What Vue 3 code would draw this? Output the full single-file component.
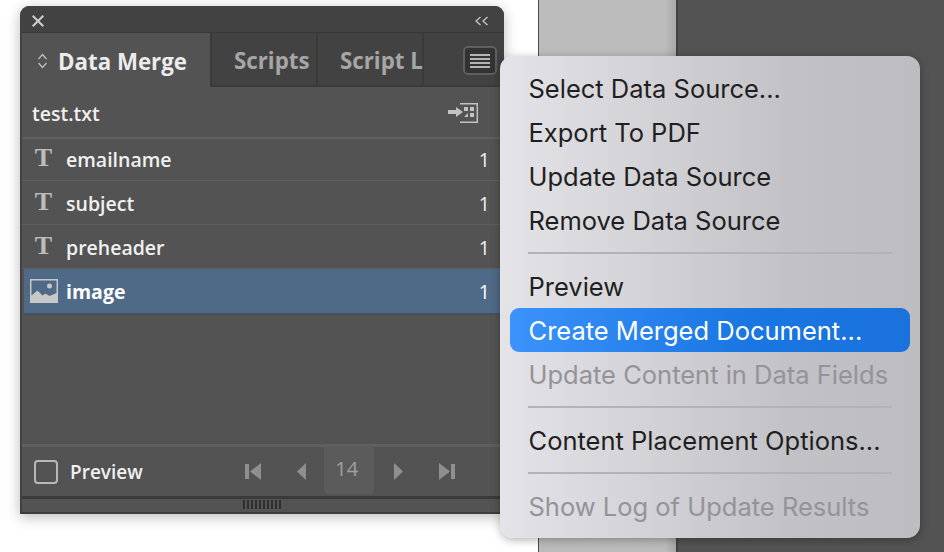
<script setup>
const rows = [
  { name: 'emailname', count: 1, kind: 'text' },
  { name: 'subject', count: 1, kind: 'text' },
  { name: 'preheader', count: 1, kind: 'text' },
  { name: 'image', count: 1, kind: 'image' },
]
const menu = [
  [
    { label: 'Select Data Source...' },
    { label: 'Export To PDF' },
    { label: 'Update Data Source' },
    { label: 'Remove Data Source' },
  ],
  [
    { label: 'Preview' },
    { label: 'Create Merged Document...', active: true },
    { label: 'Update Content in Data Fields', disabled: true },
  ],
  [{ label: 'Content Placement Options...' }],
  [{ label: 'Show Log of Update Results', disabled: true }],
]
</script>

<template>
  <div class="stage">
    <div class="paper"></div>
    <div class="pasteboard"></div>
    <div class="workspace"></div>

    <section class="panel">
      <header class="titlebar">
        <svg class="close" width="12" height="12" viewBox="0 0 12 12"><path d="M.7.7 11.300 11.300M11.300.7.7 11.300" stroke="#cfcfcf" stroke-width="2" fill="none"/></svg>
        <svg class="collapse" width="14" height="10" viewBox="0 0 14 10"><path d="M5.5 1 1 5 5.5 9M12.5 1 8 5 12.500 9" stroke="#c8c8c8" stroke-width="1.3" fill="none"/></svg>
      </header>

      <nav class="tabs">
        <div class="tab tab-active">
          <svg class="updown" width="11" height="16" viewBox="0 0 11 16"><path d="M1.5 6 5.5 1.500 9.500 6M1.500 10 5.500 14.500 9.500 10" stroke="#c2c2c2" stroke-width="1.2" fill="none"/></svg>
          <span>Data Merge</span>
        </div>
        <div class="tab">Scripts</div>
        <div class="tab">Script L</div>
        <div class="tab-rest">
          <button class="menu-btn" type="button">
            <i></i><i></i><i></i><i></i>
          </button>
        </div>
      </nav>

      <div class="source">
        <span class="source-name">test.txt</span>
        <svg width="30" height="20" viewBox="0 0 30 20">
          <path d="M0 8h8V5l7 5-7 5v-3H0z" fill="#c2c2c2" transform="translate(0 -1)"/>
          <path d="M12 .7h17.300v18.600H12" fill="none" stroke="#c2c2c2" stroke-width="1.400"/>
          <path d="M16 4h4v4h-4zM22 4h4v4h-4zM22 10h4v4h-4zM16 14l4-4v4z" fill="#c2c2c2"/>
        </svg>
      </div>

      <ul class="rows">
        <li v-for="row in rows" :key="row.name" class="row" :class="{ selected: row.kind === 'image' }">
          <span class="row-icon">
            <span v-if="row.kind === 'text'" class="t-icon">T</span>
            <svg v-else width="28" height="24" viewBox="0 0 28 24">
              <path fill="#c8c8c8" fill-rule="evenodd" d="M0 0h28v24H0zM1.500 1.500v15l6-5 5 5 3-2 4 2.500 7-3V1.500z"/>
              <circle cx="19.500" cy="7" r="2.500" fill="#c8c8c8"/>
            </svg>
          </span>
          <span class="row-name">{{ row.name }}</span>
          <span class="row-count">{{ row.count }}</span>
        </li>
      </ul>

      <footer class="foot">
        <label class="check"><i class="box"></i><span>Preview</span></label>
        <div class="pager">
          <svg class="nav" width="17" height="17" viewBox="0 0 17 17"><path d="M0 1h4v15H0zM16 0v17L5 8.500z" fill="#8f8f8f"/></svg>
          <svg class="nav nav-prev" width="9" height="17" viewBox="0 0 9 17"><path d="M9 0v17L0 8.500z" fill="#8f8f8f"/></svg>
          <span class="page">14</span>
          <svg class="nav nav-next" width="9" height="17" viewBox="0 0 9 17"><path d="M0 0v17L9 8.500z" fill="#8f8f8f"/></svg>
          <svg class="nav nav-last" width="17" height="17" viewBox="0 0 17 17"><path d="M13 1h4v15h-4zM1 0v17L12 8.500z" fill="#8f8f8f"/></svg>
        </div>
      </footer>
      <div class="grip"><div class="grip-marks"></div></div>
    </section>

    <aside class="menu">
      <template v-for="(group, g) in menu" :key="g">
        <hr v-if="g > 0" class="sep" />
        <div
          v-for="item in group"
          :key="item.label"
          class="item"
          :class="{ active: item.active, disabled: item.disabled }"
        >{{ item.label }}</div>
      </template>
    </aside>
  </div>
</template>

<style scoped>
.stage {
  position: relative;
  width: 944px;
  height: 552px;
  overflow: hidden;
  display: flex;
  background: #fff;
}
.paper { width: 538px; background: #fff; border-right: 1px solid #4a4a4a; }
.pasteboard { width: 137px; background: linear-gradient(90deg, #bcbcbc 0, #bcbcbc 92%, #a8a8a8 100%); border-right: 2px solid #424242; }
.workspace { flex: 1; background: #535353; }

.panel {
  position: absolute;
  left: 20px;
  top: 6px;
  width: 484px;
  height: 508px;
  box-sizing: border-box;
  display: flex;
  flex-direction: column;
  background: #535353;
  border-radius: 9px 9px 0 0;
  border-left: 2px solid #424242;
  border-bottom: 2px solid #3c3c3c;
  box-shadow: 0 3px 14px rgba(0, 0, 0, 0.28);
  font-family: "Open Sans", sans-serif;
  color: #f0f0f0;
  overflow: hidden;
}
.titlebar {
  height: 27px;
  flex: none;
  box-sizing: border-box;
  background: #424242;
  border-bottom: 1px solid #383838;
  display: flex;
  align-items: center;
  justify-content: space-between;
  padding: 3px 15px 0 10px;
}
.tabs {
  display: flex;
  height: 54px;
  flex: none;
  background: #424242;
}
.tab {
  box-sizing: border-box;
  width: 106px;
  height: 54px;
  border-right: 2px solid #3a3a3a;
  border-bottom: 2px solid #3a3a3a;
  display: flex;
  align-items: center;
  padding: 3px 0 0 22px;
  font-size: 22.3px;
  font-weight: 700;
  color: #a6a6a6;
  white-space: nowrap;
}
.tab-active {
  width: 190px;
  background: #535353;
  color: #ececec;
  border-bottom: 0;
  padding: 2px 0 0 15px;
  gap: 10px;
}
.updown { margin-top: -1px; }
.tab-rest {
  flex: 1;
  position: relative;
  border-bottom: 2px solid #3a3a3a;
  height: 54px;
  box-sizing: border-box;
}
.menu-btn {
  position: absolute;
  left: 39px;
  top: 13px;
  width: 34px;
  height: 29px;
  box-sizing: border-box;
  background: #333;
  border: 2px solid #5f5f5f;
  border-radius: 5px;
  padding: 0;
  display: flex;
  flex-direction: column;
  align-items: center;
  justify-content: center;
  gap: 2px;
}
.menu-btn i { display: block; width: 20px; height: 2px; background: #b4b4b4; }

.source {
  height: 52px;
  flex: none;
  box-sizing: border-box;
  padding: 1px 12px 0 10px;
  display: flex;
  align-items: center;
  justify-content: space-between;
  font-size: 19.5px;
  font-weight: 600;
  border-bottom: 2px solid #5f5f5f;
}
.source-name { padding-top: 2px; }
.source svg { margin-right: 14px; }
.rows { list-style: none; margin: 0; padding: 0; flex: 1; }
.row {
  height: 44px;
  box-sizing: border-box;
  display: flex;
  align-items: center;
  padding: 2px 14px 0 8px;
  font-size: 19.5px;
  font-weight: 600;
  border-bottom: 1px solid #5f5f5f;
}
.row:first-child { height: 42px; padding-top: 0; }
.row.selected {
  background: #4f6a87;
  border-bottom: 2px solid #45515f;
  height: 46px;
  margin-left: 2px;
  padding: 1px 14px 0 6px;
  color: #fff;
  font-weight: 700;
}
.row-icon { width: 36px; flex: none; display: flex; justify-content: center; }
.row-icon svg { margin: -1px 8px 0 0; }
.t-icon {
  font-family: "Liberation Serif", serif;
  font-weight: 700;
  font-size: 26px;
  line-height: 28px;
  color: #bdbdbd;
  margin-top: -4px;
  margin-right: 9px;
}
.row-name { flex: 1; }
.row-count { font-weight: 400; }

.foot {
  flex: none;
  height: 52px;
  box-sizing: border-box;
  border-top: 3px solid #5f5f5f;
  display: flex;
  align-items: center;
  padding-left: 12px;
}
.check { display: flex; align-items: center; gap: 12px; font-size: 19px; font-weight: 600; }
.box {
  display: block;
  width: 24px;
  height: 24px;
  box-sizing: border-box;
  border: 2px solid #b8b8b8;
  border-radius: 4px;
}
.pager { display: flex; align-items: center; margin-left: 102px; }
.nav { display: block; flex: none; }
.nav-prev { margin-left: 35px; margin-right: 18px; }
.nav-next { margin-left: 20px; }
.nav-last { margin-left: 35px; }
.page {
  width: 50px;
  height: 48px;
  margin-top: -3px;
  background: #5b5b5b;
  border-radius: 4px;
  color: #a0a0a0;
  font-size: 20px;
  display: flex;
  align-items: center;
  justify-content: center;
  padding: 0 4px 3px 0;
  box-sizing: border-box;
}
.grip {
  flex: none;
  height: 16px;
  box-sizing: border-box;
  border-top: 3px solid #3a3a3a;
  display: flex;
  justify-content: center;
  padding-top: 1px;
}
.grip-marks {
  width: 38px;
  height: 9px;
  margin-left: -2px;
  background: repeating-linear-gradient(90deg, #2f2f2f 0 2px, transparent 2px 4px);
}

.menu {
  position: absolute;
  left: 500px;
  top: 56px;
  width: 420px;
  height: 482px;
  box-sizing: border-box;
  padding: 10px;
  border-radius: 13px;
  background: linear-gradient(90deg, #e4e3e8 0%, #d3d2d7 35%, #c2c1c6 70%, #bdbcc1 100%);
  box-shadow: 0 2px 10px rgba(0, 0, 0, 0.3);
  font-family: Inter, sans-serif;
  color: #1f1f21;
}
.item {
  height: 44px;
  line-height: 46px;
  padding-left: 18.5px;
  font-size: 25.5px;
  white-space: nowrap;
  border-radius: 9px;
}
.item.active {
  color: #fff;
  background: linear-gradient(90deg, #3b92fb 0%, #1976e2 60%, #1a72dd 100%);
}
.item.disabled { color: #949398; }
.sep {
  border: 0;
  height: 2px;
  margin: 10px 18px;
  background: #b3b2b7;
}
</style>
